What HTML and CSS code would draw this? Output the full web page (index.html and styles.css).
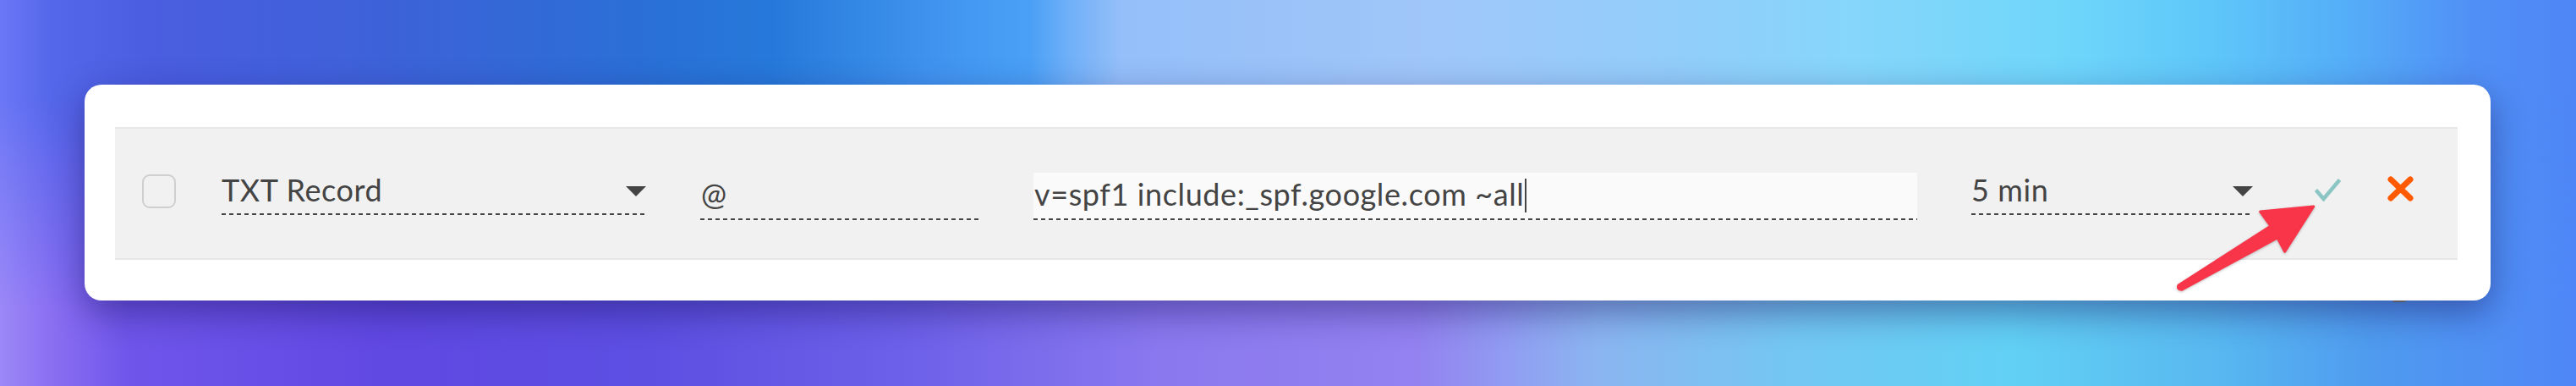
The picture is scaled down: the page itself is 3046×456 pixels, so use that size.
FILE: index.html
```html
<!DOCTYPE html>
<html lang="en">
<head>
<meta charset="utf-8">
<title>DNS record</title>
<link rel="stylesheet" href="styles.css">
</head>
<body>
<div class="page">
  <div class="card">
    <div class="record-row">
      <span class="checkbox"></span>
      <div class="select select-type">
        <span class="select-text">TXT Record</span>
        <span class="caret-down"></span>
      </div>
      <div class="field field-host">
        <span class="field-text">@</span>
      </div>
      <div class="field field-value">
        <span class="field-text">v=spf1 include:_spf.google.com ~all</span>
        <span class="text-cursor"></span>
      </div>
      <div class="select select-ttl">
        <span class="select-text">5 min</span>
        <span class="caret-down"></span>
      </div>
      <button class="icon-btn btn-save" aria-label="Save">
        <svg viewBox="0 0 31 27" width="31" height="27"><polyline points="1.5,13.5 10.5,24 29.5,1.5" fill="none" stroke="#8bc6c5" stroke-width="4.5"/></svg>
      </button>
      <button class="icon-btn btn-cancel" aria-label="Cancel">
        <svg viewBox="0 0 31 30" width="31" height="30"><path d="M4 4 L27 26 M27 4 L4 26" fill="none" stroke="#ff5a00" stroke-width="7" stroke-linecap="round"/></svg>
      </button>
    </div>
    <span class="under-tab"></span>
    <svg class="annotation-arrow" viewBox="0 0 170 106" width="170" height="106">
      <path d="M165.7 4 L102.7 10 L115 27 L6 97 Q4 102 10 102.3 L123 41 L131.7 57.3 Z" fill="#f9354a" stroke="#f9354a" stroke-width="3" stroke-linejoin="round"/>
    </svg>
  </div>
</div>
</body>
</html>
```

FILE: styles.css
```css
body {
  margin: 0;
}

.page {
  position: relative;
  width: 3046px;
  height: 456px;
  box-sizing: border-box;
  padding: 100px 0 0 100px;
  overflow: hidden;
  font-family: Lato, "Open Sans", sans-serif;
  background: linear-gradient(to right,
    #6b78f6 0%, #5467ea 2%, #4a5de0 6%, #3d62d8 15%, #2a6fd6 25%,
    #2679da 30%, #3f93ee 36%, #4aa0f6 40%, #6fb0f8 41.5%, #94bff9 43.5%,
    #a0c6f9 55%, #92cdfa 65%, #86d6fb 72%, #6fd6fa 80%, #5ec6f9 86%,
    #55aef8 91%, #5090f6 96%, #4f86f6 100%);
}

.page::before {
  content: "";
  position: absolute;
  inset: 0;
  background: linear-gradient(to right,
    #9c88f7 0%, #8a6ff2 2%, #6f55ea 5%, #6048e2 15%, #5c4fe2 25%,
    #6c60e9 35%, #8a78ef 45%, #9382f0 55%, #90a0f2 59%, #8bb5f0 62%,
    #72c8f2 70%, #62d0f4 78%, #58b8f0 86%, #4f9bef 92%, #4f86f7 100%);
  -webkit-mask-image: linear-gradient(to bottom, transparent 25%, #000 80%);
  mask-image: linear-gradient(to bottom, transparent 25%, #000 80%);
}

.card {
  position: relative;
  z-index: 1;
  width: 2845px;
  height: 255px;
  box-sizing: border-box;
  padding: 50px 39px 0 36px;
  background: #fff;
  border-radius: 20px;
  box-shadow: 0 14px 40px rgba(25, 15, 90, 0.45);
}

.record-row {
  display: flex;
  align-items: flex-start;
  height: 157px;
  box-sizing: border-box;
  padding: 52px 0 0 32px;
  background: #f1f1f1;
  border-top: 2px solid #e7e7e7;
  border-bottom: 2px solid #e7e7e7;
}

.checkbox {
  flex: none;
  width: 40px;
  height: 40px;
  box-sizing: border-box;
  margin-top: 2px;
  border: 2px solid #cfcfcf;
  border-radius: 9px;
}

.select {
  flex: none;
  display: flex;
  justify-content: space-between;
  align-items: flex-start;
  height: 50px;
  box-sizing: border-box;
  padding-top: 2px;
  background: repeating-linear-gradient(to right, #444 0 5px, transparent 5px 9px) left bottom / 100% 2px no-repeat;
}

.select-type {
  width: 502px;
  margin-left: 54px;
}

.select-ttl {
  width: 333px;
  margin-left: 64px;
}

.select-text,
.field-text {
  font-size: 36px;
  line-height: 36px;
  letter-spacing: 0.6px;
  color: #444;
  white-space: pre;
}

.caret-down {
  width: 0;
  height: 0;
  margin-top: 14px;
  border-left: 12px solid transparent;
  border-right: 12px solid transparent;
  border-top: 12px solid #444;
}

.field {
  flex: none;
  display: flex;
  align-items: flex-start;
  height: 56px;
  box-sizing: border-box;
  padding: 7px 0 0 1px;
  background: repeating-linear-gradient(to right, #444 0 5px, transparent 5px 9px) left bottom / 100% 2px no-repeat;
}

.field-host {
  width: 332px;
  margin-left: 64px;
}

.field-value {
  width: 1045px;
  margin-left: 62px;
  background-color: #fafafa;
}

.text-cursor {
  width: 2px;
  height: 40px;
  margin-left: 1px;
  background: #444;
}

.icon-btn {
  flex: none;
  display: block;
  padding: 0;
  border: 0;
  background: none;
}

.icon-btn svg {
  display: block;
}

.btn-save {
  margin-left: 73px;
  margin-top: 7px;
}

.btn-cancel {
  margin-left: 55px;
  margin-top: 4px;
}

.under-tab {
  position: absolute;
  left: 2729px;
  top: 100%;
  width: 16px;
  height: 2px;
  background: #5a5a66;
  border-radius: 0 0 2px 2px;
}

.annotation-arrow {
  position: absolute;
  left: 2470px;
  top: 140px;
  overflow: visible;
  filter: drop-shadow(0 1px 1.5px rgba(0, 0, 0, 0.25));
}
```
